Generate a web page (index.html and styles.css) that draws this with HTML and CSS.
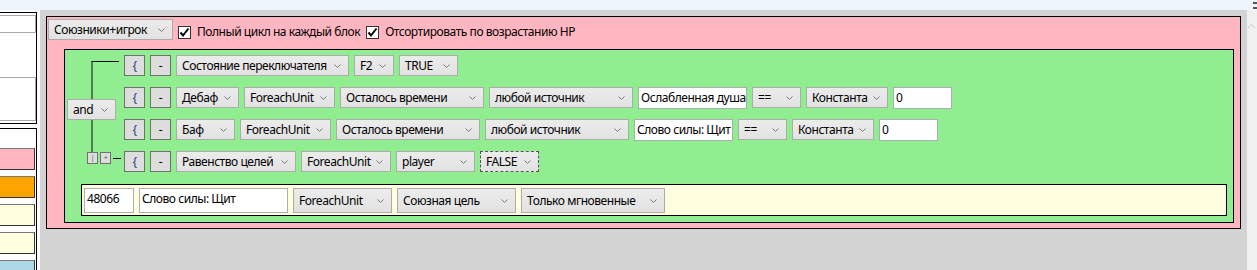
FILE: index.html
```html
<!DOCTYPE html>
<html lang="ru">
<head>
    <meta charset="UTF-8">
    <title>Rotation editor</title>
    <link rel="stylesheet" href="styles.css">
</head>
<body>
    <div class="titlebar"><span class="title-ico"></span></div>
    <div class="main">
        <!-- левая панель -->
        <aside class="side">
            <div class="side-box side-top">
                <div class="side-field"></div>
                <div class="side-field tall"></div>
            </div>
            <div class="side-box side-list">
                <div class="swatch pink"></div>
                <div class="swatch orange"></div>
                <div class="swatch yellow"></div>
                <div class="swatch yellow"></div>
                <div class="swatch blue"></div>
            </div>
        </aside>

        <div class="canvas">
            <div class="block">
                <div class="block-head">
                    <div class="combo w125">Союзники+игрок<svg class="chev" width="7" height="4"><polyline points="0.5,0.5 3.5,3.5 6.5,0.5"/></svg></div>
                    <label class="check"><span class="box"><svg width="11" height="11"><polyline points="1.5,5.5 4,8.5 9.5,1.5"/></svg></span>Полный цикл на каждый блок</label>
                    <label class="check"><span class="box"><svg width="11" height="11"><polyline points="1.5,5.5 4,8.5 9.5,1.5"/></svg></span>Отсортировать по возрастанию HP</label>
                </div>

                <div class="cond-box">
                    <div class="cond">
                        <!-- дерево условий -->
                        <div class="tree">
                            <div class="tree-top"></div>
                            <div class="combo w49 and">and<svg class="chev" width="7" height="4"><polyline points="0.5,0.5 3.5,3.5 6.5,0.5"/></svg></div>
                            <div class="tree-mid"></div>
                            <div class="tree-bot">
                                <span class="mini">|</span>
                                <span class="mini">+</span>
                                <span class="tree-link"></span>
                            </div>
                        </div>

                        <div class="rows">
                            <div class="row">
                                <span class="btn brace">{</span>
                                <span class="btn">-</span>
                                <div class="combo w173">Состояние переключателя<svg class="chev" width="7" height="4"><polyline points="0.5,0.5 3.5,3.5 6.5,0.5"/></svg></div>
                                <div class="combo w40">F2<svg class="chev" width="7" height="4"><polyline points="0.5,0.5 3.5,3.5 6.5,0.5"/></svg></div>
                                <div class="combo w59">TRUE<svg class="chev" width="7" height="4"><polyline points="0.5,0.5 3.5,3.5 6.5,0.5"/></svg></div>
                            </div>
                            <div class="row">
                                <span class="btn brace">{</span>
                                <span class="btn">-</span>
                                <div class="combo w63">Дебаф<svg class="chev" width="7" height="4"><polyline points="0.5,0.5 3.5,3.5 6.5,0.5"/></svg></div>
                                <div class="combo w91">ForeachUnit<svg class="chev" width="7" height="4"><polyline points="0.5,0.5 3.5,3.5 6.5,0.5"/></svg></div>
                                <div class="combo w144">Осталось времени<svg class="chev" width="7" height="4"><polyline points="0.5,0.5 3.5,3.5 6.5,0.5"/></svg></div>
                                <div class="combo w144">любой источник<svg class="chev" width="7" height="4"><polyline points="0.5,0.5 3.5,3.5 6.5,0.5"/></svg></div>
                                <div class="field w109">Ослабленная душа</div>
                                <div class="combo w49">==<svg class="chev" width="7" height="4"><polyline points="0.5,0.5 3.5,3.5 6.5,0.5"/></svg></div>
                                <div class="combo w82">Константа<svg class="chev" width="7" height="4"><polyline points="0.5,0.5 3.5,3.5 6.5,0.5"/></svg></div>
                                <div class="field w59">0</div>
                            </div>
                            <div class="row">
                                <span class="btn brace">{</span>
                                <span class="btn">-</span>
                                <div class="combo w59">Баф<svg class="chev" width="7" height="4"><polyline points="0.5,0.5 3.5,3.5 6.5,0.5"/></svg></div>
                                <div class="combo w91">ForeachUnit<svg class="chev" width="7" height="4"><polyline points="0.5,0.5 3.5,3.5 6.5,0.5"/></svg></div>
                                <div class="combo w144">Осталось времени<svg class="chev" width="7" height="4"><polyline points="0.5,0.5 3.5,3.5 6.5,0.5"/></svg></div>
                                <div class="combo w144">любой источник<svg class="chev" width="7" height="4"><polyline points="0.5,0.5 3.5,3.5 6.5,0.5"/></svg></div>
                                <div class="field w99">Слово силы: Щит</div>
                                <div class="combo w49">==<svg class="chev" width="7" height="4"><polyline points="0.5,0.5 3.5,3.5 6.5,0.5"/></svg></div>
                                <div class="combo w82">Константа<svg class="chev" width="7" height="4"><polyline points="0.5,0.5 3.5,3.5 6.5,0.5"/></svg></div>
                                <div class="field w59">0</div>
                            </div>
                            <div class="row">
                                <span class="btn brace">{</span>
                                <span class="btn">-</span>
                                <div class="combo w120">Равенство целей<svg class="chev" width="7" height="4"><polyline points="0.5,0.5 3.5,3.5 6.5,0.5"/></svg></div>
                                <div class="combo w90">ForeachUnit<svg class="chev" width="7" height="4"><polyline points="0.5,0.5 3.5,3.5 6.5,0.5"/></svg></div>
                                <div class="combo w79">player<svg class="chev" width="7" height="4"><polyline points="0.5,0.5 3.5,3.5 6.5,0.5"/></svg></div>
                                <div class="combo w59 focus">FALSE<svg class="chev" width="7" height="4"><polyline points="0.5,0.5 3.5,3.5 6.5,0.5"/></svg></div>
                            </div>
                        </div>
                    </div>

                    <!-- действие -->
                    <div class="action">
                        <div class="field tall w50">48066</div>
                        <div class="field tall w149">Слово силы: Щит</div>
                        <div class="combo tall w99">ForeachUnit<svg class="chev" width="7" height="4"><polyline points="0.5,0.5 3.5,3.5 6.5,0.5"/></svg></div>
                        <div class="combo tall w119">Союзная цель<svg class="chev" width="7" height="4"><polyline points="0.5,0.5 3.5,3.5 6.5,0.5"/></svg></div>
                        <div class="combo tall w144">Только мгновенные<svg class="chev" width="7" height="4"><polyline points="0.5,0.5 3.5,3.5 6.5,0.5"/></svg></div>
                    </div>
                </div>
            </div>
        </div>

        <div class="scrollbar"><svg width="9" height="6"><polyline points="1,5 4.5,1.5 8,5"/></svg></div>
    </div>
</body>
</html>
```

FILE: styles.css
```css
* {
    box-sizing: border-box;
}
body {
    margin: 0;
    font-family: "Noto Sans", "Open Sans", sans-serif;
    font-size: 12px;
    letter-spacing: -0.45px;
    color: #000;
    background-color: #d3d3d3;
    overflow: hidden;
}
.titlebar {
    height: 10px;
    background-color: #eef5fc;
    display: flex;
    justify-content: flex-end;
}
.title-ico {
    width: 4px;
    height: 7px;
    margin-top: 2px;
    border-top: 2px solid #555;
    border-bottom: 2px solid #555;
}
.main {
    display: flex;
    height: 260px;
}

/* левая панель */
.side {
    width: 40px;
    background-color: #fff;
    padding-top: 2px;
    overflow: hidden;
}
.side-box {
    width: 40px;
    margin-left: -3px;
    border: 1px solid #000;
    background-color: #fff;
}
.side-top {
    height: 112px;
    padding-top: 2px;
}
.side-field {
    height: 18px;
    width: 38px;
    border: 1px solid #a8a8a8;
}
.side-field.tall {
    height: 44px;
    margin-top: 44px;
}
.side-list {
    margin-top: 4px;
    height: 150px;
    padding-top: 19px;
}
.swatch {
    width: 37px;
    height: 22px;
    margin-bottom: 6px;
    border: 1px solid #333;
    border-top-color: #777;
}
.swatch.pink { background-color: #ffb6c1; }
.swatch.orange { background-color: #ffa500; }
.swatch.yellow { background-color: #ffffe0; }
.swatch.blue { background-color: #add8e6; }

/* рабочая область */
.canvas {
    flex: 1;
    padding: 6px 6px 0 6px;
}
.block {
    background-color: #ffb6c1;
    border: 1px solid #000;
    padding: 2px 6px 5px 1px;
}
.block-head {
    display: flex;
    align-items: flex-start;
    gap: 5px;
    height: 20px;
}
.check {
    display: flex;
    align-items: center;
    gap: 6px;
    margin-top: 6px;
    margin-right: 1px;
    line-height: 14px;
}
.box {
    width: 13px;
    height: 13px;
    border: 1px solid #333;
    background-color: #fff;
    display: flex;
    align-items: center;
    justify-content: center;
}
.box polyline {
    fill: none;
    stroke: #000;
    stroke-width: 2;
}

.cond-box {
    margin: 10px 0 0 16px;
    background-color: #90ee90;
    border: 1px solid #000;
    padding: 5px 6px 6px 0;
}
.cond {
    display: flex;
}
.tree {
    width: 59px;
    display: flex;
    flex-direction: column;
    align-items: flex-start;
}
.tree-top {
    margin: 6px 0 0 26px;
    width: 28px;
    height: 38px;
    border-top: 1px solid #000;
    border-left: 2px solid #4f7f4f;
}
.tree .and {
    margin-left: 2px;
}
.tree-mid {
    margin: 0 0 0 26px;
    height: 32px;
    border-left: 2px solid #4f7f4f;
}
.tree-bot {
    display: flex;
    align-items: center;
    gap: 2px;
    margin-left: 22px;
}
.mini {
    width: 11px;
    height: 12px;
    border: 1px solid #707070;
    background-color: #dddddd;
    font-size: 7px;
    line-height: 10px;
    text-align: center;
    color: #555;
}
.tree-link {
    width: 8px;
    border-top: 1px solid #000;
}

.rows {
    display: flex;
    flex-direction: column;
    gap: 11px;
}
.row {
    display: flex;
    gap: 5px;
    height: 21px;
}
.btn {
    width: 21px;
    height: 21px;
    border: 1px solid #707070;
    background-color: #dddddd;
    display: flex;
    align-items: center;
    justify-content: center;
    line-height: 1;
}
.btn.brace {
    color: #1d3f78;
}

.combo {
    height: 21px;
    border: 1px solid #acacac;
    background: linear-gradient(#ececec, #e2e2e2);
    display: flex;
    align-items: center;
    justify-content: space-between;
    padding: 0 7px 0 5px;
    white-space: nowrap;
    flex: none;
}
.combo.focus {
    border: 1px dashed #555;
}
.chev {
    flex: none;
    margin-left: 4px;
}
.chev polyline {
    fill: none;
    stroke: #7a7a7a;
    stroke-width: 1;
}
.field {
    height: 22px;
    border: 1px solid #abadb3;
    background-color: #fff;
    padding: 1px 2px;
    white-space: nowrap;
    overflow: hidden;
    flex: none;
}
.tall {
    height: 25px;
}

.action {
    margin: 12px 0 0 16px;
    background-color: #ffffe0;
    border: 1px solid #000;
    padding: 3px 2px 2px 2px;
    display: flex;
    gap: 5px;
}

.scrollbar {
    width: 10px;
    background-color: #f0f0f0;
    padding-top: 6px;
}
.scrollbar polyline {
    fill: none;
    stroke: #c8c8c8;
    stroke-width: 1;
}

.w40 { width: 40px; }
.w49 { width: 49px; }
.w50 { width: 50px; }
.w59 { width: 59px; }
.w63 { width: 63px; }
.w79 { width: 79px; }
.w82 { width: 82px; }
.w90 { width: 90px; }
.w91 { width: 91px; }
.w99 { width: 99px; }
.w109 { width: 109px; }
.w119 { width: 119px; }
.w120 { width: 120px; }
.w125 { width: 125px; }
.w144 { width: 144px; }
.w149 { width: 149px; }
.w173 { width: 173px; }
```
